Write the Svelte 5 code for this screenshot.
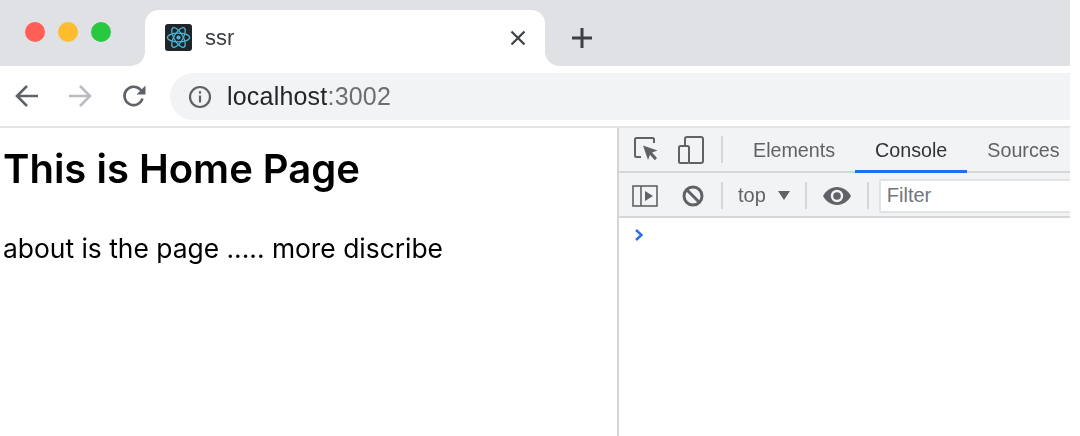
<script lang="ts">
	const lights = ['#ff5f57', '#febc2e', '#28c840'];
</script>

<div class="window">
	<header class="strip">
		<div class="lights">
			{#each lights as color}
				<span class="light" style:background={color}></span>
			{/each}
		</div>
		<div class="tab">
			<span class="favicon">
				<svg viewBox="0 0 28 28" width="27" height="27" fill="none" stroke="#4db6d6" stroke-width="1.3">
					<ellipse cx="14" cy="14" rx="11.5" ry="4.6" />
					<ellipse cx="14" cy="14" rx="11.5" ry="4.6" transform="rotate(60 14 14)" />
					<ellipse cx="14" cy="14" rx="11.5" ry="4.6" transform="rotate(120 14 14)" />
					<circle cx="14" cy="14" r="2.2" fill="#4db6d6" stroke="none" />
				</svg>
			</span>
			<span class="tab-title">ssr</span>
			<svg class="close" viewBox="0 0 16 16" width="16" height="16" stroke="#3c4043" stroke-width="2.2" fill="none">
				<path d="M1.5 1.5l13 13M14.5 1.5l-13 13" />
			</svg>
		</div>
		<svg class="plus" viewBox="0 0 20 20" width="20" height="20" stroke="#3c4043" stroke-width="3" fill="none">
			<path d="M10 0v20M0 10h20" />
		</svg>
	</header>

	<nav class="toolbar">
		<svg viewBox="0 0 24 24" width="24" height="24" fill="none" stroke="#5f6368" stroke-width="2.6">
			<path d="M23 12H2.5M12 2L2 12l10 10" />
		</svg>
		<svg class="forward" viewBox="0 0 24 24" width="24" height="24" fill="none" stroke="#b9bbbe" stroke-width="2.6">
			<path d="M1 12h20.5M12 2l10 10-10 10" />
		</svg>
		<svg class="reload" viewBox="0 0 24 24" width="24" height="24" fill="none">
			<path d="M20.5 14.5A9.2 9.2 0 1 1 18.4 5.6L21 8.2" stroke="#5f6368" stroke-width="2.6" />
			<path d="M23.5 1.5V10.5H14.5Z" fill="#5f6368" />
		</svg>
		<div class="omnibox">
			<svg viewBox="0 0 24 24" width="24" height="24" fill="none" stroke="#5f6368" stroke-width="2.2">
				<circle cx="12" cy="12" r="10" />
				<path d="M12 10.5v7" />
				<path d="M12 6.2v2.4" />
			</svg>
			<span class="url">localhost<span class="port">:3002</span></span>
		</div>
	</nav>

	<main class="split">
		<section class="page">
			<h1>This is Home Page</h1>
			<p>about is the page ..... more discribe</p>
		</section>

		<aside class="devtools">
			<div class="row tabs-row">
				<svg viewBox="0 0 24 25" width="24" height="25" fill="none" class="inspect">
					<path d="M7 20H2.500A1.500 1.500 0 0 1 1 18.500V2.500A1.500 1.500 0 0 1 2.500 1h16A1.500 1.500 0 0 1 20 2.500V6" stroke="#5f6368" stroke-width="2" />
					<path d="M9 8.500l14.500 5-5.400 2 4.900 5.500-2.200 2.200-4.800-5.500-2 5.300z" fill="#5f6368" />
				</svg>
				<svg viewBox="0 0 26 28" width="26" height="28" fill="none" stroke="#5f6368" stroke-width="2" class="device">
					<path d="M7 9V3a2 2 0 0 1 2-2h14a2 2 0 0 1 2 2v22a2 2 0 0 1-2 2H11" />
					<rect x="1" y="10" width="10" height="17" rx="1.500" />
				</svg>
				<span class="sep"></span>
				<span class="dt-tab first">Elements</span>
				<span class="dt-tab active">Console</span>
				<span class="dt-tab">Sources</span>
			</div>
			<div class="row filter-row">
				<svg viewBox="0 0 26 22" width="26" height="22" fill="none" class="sidebar">
					<rect x="1" y="1" width="24" height="20" stroke="#5f6368" stroke-width="1.600" />
					<path d="M9 1v20" stroke="#5f6368" stroke-width="1.600" />
					<path d="M13 6l8 5-8 5z" fill="#5f6368" />
				</svg>
				<svg viewBox="0 0 22 22" width="22" height="22" fill="none" stroke="#5f6368" stroke-width="3" class="block">
					<circle cx="11" cy="11" r="9" />
					<path d="M4.500 4.500l13 13" />
				</svg>
				<span class="sep first-sep"></span>
				<span class="context">top</span>
				<svg viewBox="0 0 12 9" width="12" height="9" class="caret"><path d="M0 0h12L6 9z" fill="#5f6368" /></svg>
				<span class="sep"></span>
				<svg viewBox="0 0 28 18" width="28" height="18" class="eye">
					<path d="M14 0C8 0 3 3.700 0 9c3 5.300 8 9 14 9s11-3.700 14-9c-3-5.300-8-9-14-9z" fill="#5f6368" />
					<circle cx="14" cy="9" r="6.200" fill="#f1f3f4" />
					<circle cx="14" cy="9" r="3.800" fill="#5f6368" />
				</svg>
				<span class="sep"></span>
				<div class="filter">Filter</div>
			</div>
			<div class="console">
				<svg viewBox="0 0 10 12" width="10" height="12" fill="none" stroke="#2a6fe8" stroke-width="2.400">
					<path d="M2 1l5.500 5L2 11" />
				</svg>
			</div>
		</aside>
	</main>
</div>

<style>
	:global(body) {
		background: #fff;
	}
	/* the reference is a slightly upscaled capture */
	.window {
		width: 1070px;
		height: 436px;
		overflow: hidden;
		font-family: 'Liberation Sans', Arial, sans-serif;
		display: flex;
		flex-direction: column;
		filter: blur(0.35px);
	}
	svg {
		flex: none;
	}
	.strip {
		height: 66px;
		flex: none;
		background: #dfe1e5;
		display: flex;
		align-items: flex-end;
		padding-left: 25px;
		box-sizing: border-box;
	}
	.lights {
		display: flex;
		gap: 13px;
		align-self: flex-start;
		margin-top: 22px;
		width: 120px;
	}
	.light {
		width: 20px;
		height: 20px;
		border-radius: 50%;
	}
	.tab {
		position: relative;
		width: 400px;
		height: 56px;
		background: #fff;
		border-radius: 14px 14px 0 0;
		display: flex;
		align-items: center;
		padding: 0 19px 0 20px;
		box-sizing: border-box;
	}
	.tab::before,
	.tab::after {
		content: '';
		position: absolute;
		bottom: 0;
		width: 14px;
		height: 14px;
	}
	.tab::before {
		left: -14px;
		background: radial-gradient(circle at 0 0, #dfe1e5 13.500px, #fff 14px);
	}
	.tab::after {
		right: -14px;
		background: radial-gradient(circle at 100% 0, #dfe1e5 13.500px, #fff 14px);
	}
	.favicon {
		width: 27px;
		height: 27px;
		margin-top: -1px;
		background: #1f2529;
		border-radius: 3px;
		display: flex;
	}
	.tab-title {
		margin-left: 13px;
		font-size: 22px;
		color: #3c4043;
		flex: 1;
		margin-top: -1px;
	}
	.close {
		margin-top: -1px;
	}
	.plus {
		margin: 0 0 18px 27px;
	}
	.toolbar {
		height: 60px;
		flex: none;
		background: #fff;
		border-bottom: 2px solid #e2e3e5;
		display: flex;
		align-items: center;
		padding: 0 0 0 15px;
	}
	.forward {
		margin-left: 29px;
	}
	.reload {
		margin-left: 30px;
	}
	.omnibox {
		flex: 1;
		height: 47px;
		margin: 1px 0 0 24px;
		background: #f1f3f4;
		border-radius: 24px 0 0 24px;
		display: flex;
		align-items: center;
		padding-left: 18px;
		gap: 15px;
	}
	.url {
		font-size: 25px;
		color: #24272a;
		letter-spacing: 0.2px;
	}
	.port {
		color: #6b6f73;
	}
	.split {
		flex: 1;
		display: flex;
		min-height: 0;
	}
	.page {
		width: 617px;
		flex: none;
		box-sizing: border-box;
		padding: 19px 0 0 3px;
		color: #000;
		font-family: Inter, 'Liberation Sans', sans-serif;
	}
	h1 {
		margin: 0;
		font-size: 40px;
		line-height: 44px;
		font-weight: 600;
	}
	p {
		margin: 41px 0 0;
		font-size: 26.4px;
		line-height: 32px;
	}
	.devtools {
		flex: 1;
		border-left: 2px solid #d4d5d7;
		display: flex;
		flex-direction: column;
		min-width: 0;
		overflow: hidden;
	}
	.row {
		flex: none;
		display: flex;
		align-items: center;
		background: #f1f3f4;
		box-sizing: border-box;
	}
	.tabs-row {
		height: 45px;
		border-bottom: 2px solid #d4d6d8;
	}
	.filter-row {
		height: 45px;
		padding-top: 2px;
		border-bottom: 2px solid #d4d6d8;
	}
	.inspect {
		margin-left: 15px;
	}
	.device {
		margin-left: 20px;
	}
	.sep {
		width: 2px;
		height: 27px;
		background: #d4d6d8;
		flex: none;
	}
	.tabs-row .sep {
		margin-left: 17px;
	}
	.dt-tab {
		flex: none;
		display: flex;
		align-items: center;
		padding: 0 20px;
		font-size: 19.7px;
		color: #5f6368;
		box-sizing: border-box;
		margin-bottom: -2px;
		height: 45px;
	}
	.dt-tab.first {
		margin-left: 10px;
	}
	.dt-tab.active {
		color: #333;
		border-bottom: 3px solid #1a73e8;
		padding-top: 3px;
	}
	.sidebar {
		margin-left: 13px;
	}
	.block {
		margin-left: 24px;
	}
	.first-sep {
		margin-left: 17px;
	}
	.context {
		margin-left: 15px;
		font-size: 20px;
		color: #5f6368;
	}
	.caret {
		margin: 0 15px 0 12px;
	}
	.eye {
		margin: 0 16px;
	}
	.filter {
		flex: 1;
		height: 34px;
		margin-left: 10px;
		background: #fff;
		border: 2px solid #e2e3e5;
		border-right: 0;
		box-sizing: border-box;
		display: flex;
		align-items: center;
		padding-left: 6px;
		font-size: 20px;
		color: #72767a;
	}
	.console {
		padding: 11px 0 0 15px;
		background: #fff;
	}
	.console svg {
		display: block;
	}
</style>
